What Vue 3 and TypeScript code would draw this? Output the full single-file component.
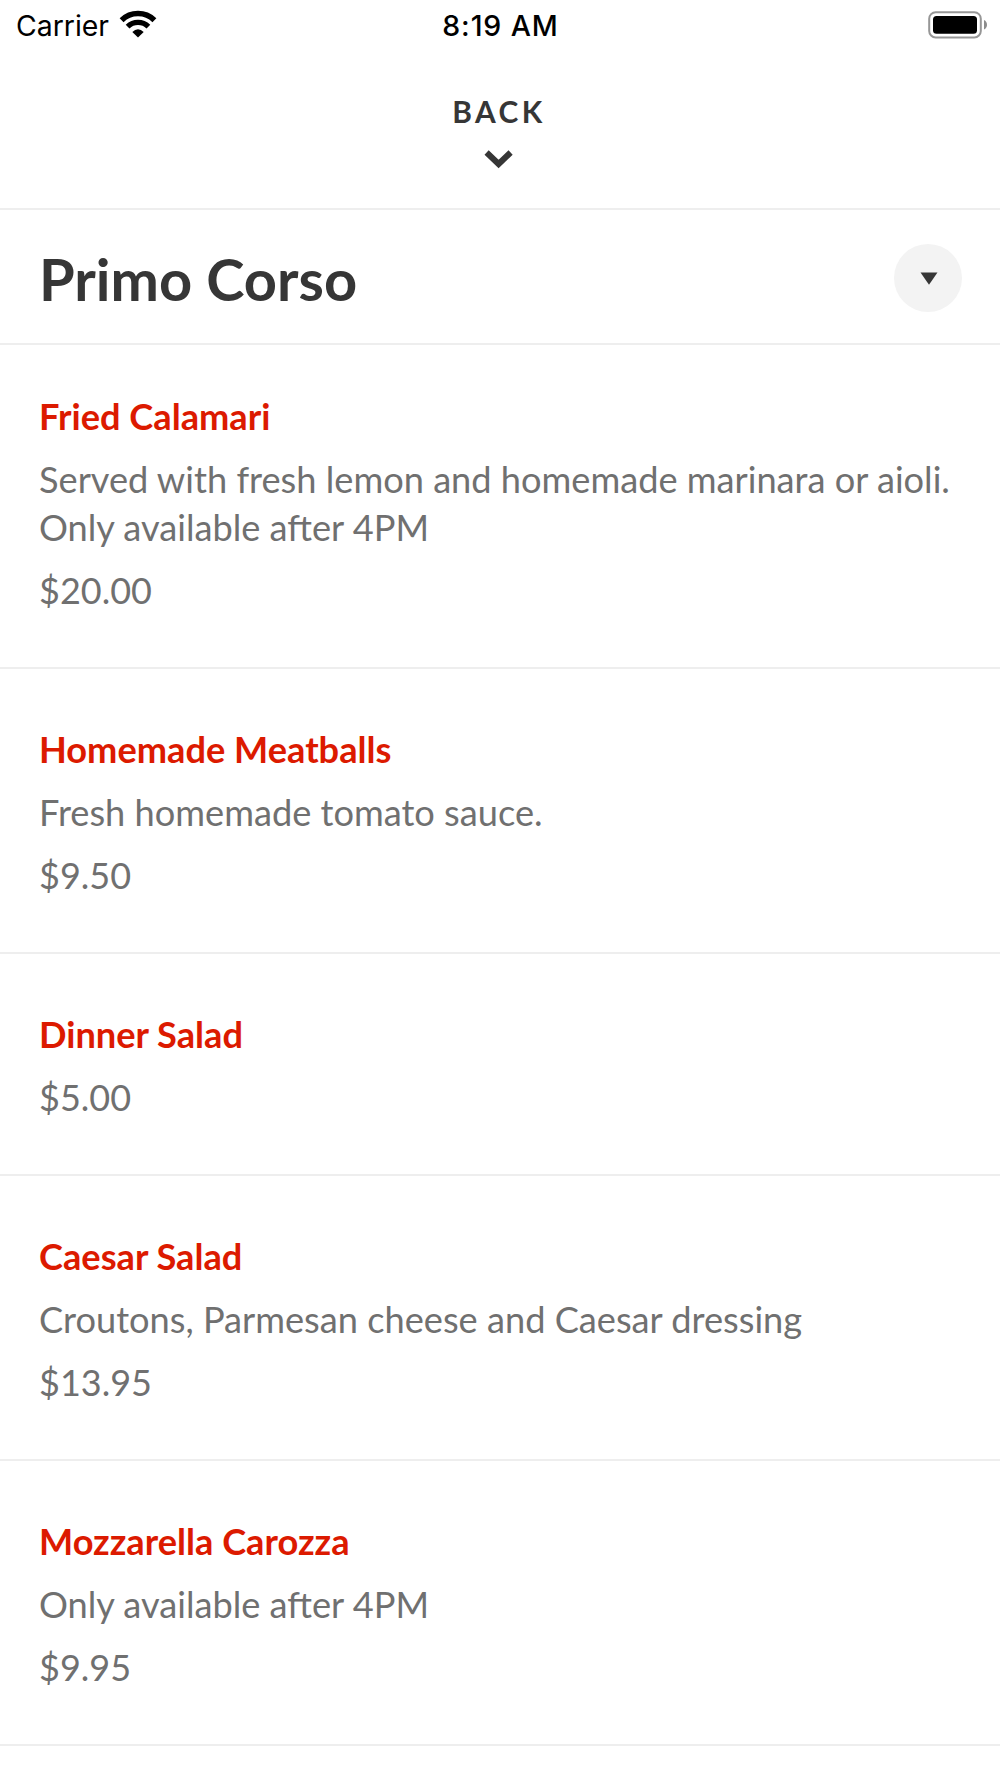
<script setup lang="ts">
interface Dish {
  name: string
  description: string[]
  price: string
}

const dishes: Dish[] = [
  { name: 'Fried Calamari', description: ['Served with fresh lemon and homemade marinara or aioli.', 'Only available after 4PM'], price: '$20.00' },
  { name: 'Homemade Meatballs', description: ['Fresh homemade tomato sauce.'], price: '$9.50' },
  { name: 'Dinner Salad', description: [], price: '$5.00' },
  { name: 'Caesar Salad', description: ['Croutons, Parmesan cheese and Caesar dressing'], price: '$13.95' },
  { name: 'Mozzarella Carozza', description: ['Only available after 4PM'], price: '$9.95' },
]
</script>

<template>
  <div class="screen">
    <div class="status">
      <div class="carrier">
        <span>Carrier</span>
        <svg class="wifi" width="38" height="28" viewBox="0 0 38 28">
          <path d="M19 27.6 L13.3 21.9 Q19 16.8 24.7 21.9 Z" fill="#000" />
          <path d="M8.6 16.6 A15 15 0 0 1 29.4 16.6" fill="none" stroke="#000" stroke-width="5.4" />
          <path d="M2.6 10.2 A23.6 23.6 0 0 1 35.4 10.2" fill="none" stroke="#000" stroke-width="5.6" />
        </svg>
      </div>
      <div class="time">8:19 AM</div>
      <svg class="battery" width="60" height="28" viewBox="0 0 60 28">
        <rect x="1.2" y="1.2" width="51.6" height="25.2" rx="6.5" fill="none" stroke="#969696" stroke-width="2" />
        <rect x="5" y="5" width="44" height="17.8" rx="3.5" fill="#000" />
        <path d="M56 9 Q59 10.5 59 13.8 Q59 17 56 18.6 Z" fill="#8c8c8c" />
      </svg>
    </div>
    <div class="back">
      <span class="back-label">BACK</span>
      <svg class="chevron" width="30" height="20" viewBox="0 0 30 20">
        <path d="M3.6 3.5 L15.6 15 L27.6 3.5" fill="none" stroke="#363636" stroke-width="6" />
      </svg>
    </div>
    <header class="section">
      <h1>Primo Corso</h1>
      <button class="toggle" type="button" aria-label="Choose section">
        <svg width="18" height="13" viewBox="0 0 18 13"><path d="M0.5 0.5 H17.5 L9 12.8 Z" fill="#363636" /></svg>
      </button>
    </header>
    <article v-for="dish in dishes" :key="dish.name" class="dish">
      <h2>{{ dish.name }}</h2>
      <div v-if="dish.description.length" class="description">
        <p v-for="line in dish.description" :key="line">{{ line }}</p>
      </div>
      <p class="price">{{ dish.price }}</p>
    </article>
  </div>
</template>

<style>
body { margin: 0; background: #fff; }
</style>

<style scoped>
.screen { width: 1000px; height: 1778px; overflow: hidden; background: #fff; font-family: Lato, sans-serif; }
.status { height: 51px; display: grid; grid-template-columns: 1fr auto 1fr; align-items: center; padding: 0 13px 0 16px; box-sizing: border-box; font-family: Inter, sans-serif; font-size: 28.4px; color: #000; }
.carrier { display: flex; align-items: center; gap: 10px; }
.wifi { margin-top: -3px; }
.time { font-size: 28.5px; font-weight: 550; letter-spacing: 0.9px; margin-left: -2px; }
.battery { justify-self: end; margin: -2px -1px 0 0; }
.back { height: 159px; box-sizing: border-box; padding: 40px 4px 0 0; border-bottom: 2px solid #eee; display: flex; flex-direction: column; align-items: center; color: #363636; }
.back-label { font-size: 29.9px; line-height: 40px; font-weight: 700; letter-spacing: 3.4px; margin-right: -2px; }
.chevron { margin-top: 18px; }
.section { height: 135px; box-sizing: border-box; padding: 0 39px; border-bottom: 2px solid #eee; display: flex; align-items: center; justify-content: space-between; }
h1 { margin: 4px 0 0; font-size: 57.8px; font-weight: 700; color: #363636; }
.toggle { width: 68px; height: 68px; margin: 2px -0.5px 0 0; border: 0; border-radius: 50%; padding: 2px 0 0 2px; background: #f3f3f3; display: flex; align-items: center; justify-content: center; }
.dish { box-sizing: border-box; padding: 47px 39px 53px; border-bottom: 2px solid #eee; }
.dish + .dish { padding-top: 56px; }
h2 { margin: 0; font-size: 36.2px; line-height: 48px; font-weight: 700; color: #dc1a00; }
p { margin: 0; font-size: 36.2px; line-height: 48px; color: #707070; white-space: nowrap; }
.description, .price { margin-top: 15px; }
.price { font-size: 36px; }
</style>
